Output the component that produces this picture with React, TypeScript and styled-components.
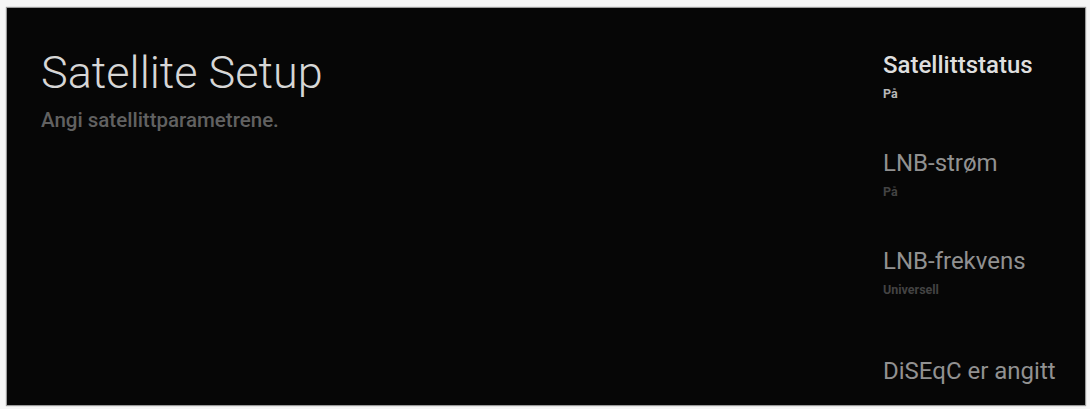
import React from 'react';
import styled, { createGlobalStyle } from 'styled-components';

const GlobalStyle = createGlobalStyle`
  html, body {
    margin: 0;
    padding: 0;
    background: #f6f6f6;
  }

  body {
    font-family: Roboto, 'Noto Sans', 'Liberation Sans', sans-serif;
  }
`;

const Screen = styled.div`
  margin: 8px 5px 4px 7px;
  height: 397px;
  background-color: #060606;
  box-shadow: 0 0 1px 1px #9a9a9a;
  display: grid;
  grid-template-columns: 1fr 202px;
  overflow: hidden;
`;

const IntroSection = styled.div`
  display: flex;
  flex-direction: column;
  gap: 10px;
  padding: 40px 0 0 34px;
`;

const Title = styled.h1`
  margin: 0;
  font-size: 45px;
  line-height: 50px;
  font-weight: 300;
  color: #d6d6d6;
`;

const Description = styled.p`
  margin: 0;
  font-size: 20.5px;
  line-height: 24px;
  font-weight: 500;
  color: #616161;
`;

const OptionList = styled.div`
  display: flex;
  flex-direction: column;
  padding-top: 20px;
`;

const Option = styled.div`
  height: 98px;
  flex-shrink: 0;
  display: flex;
  flex-direction: column;
  justify-content: center;
  gap: 8px;
`;

const OptionName = styled.p<{ $focused?: boolean }>`
  margin: 0;
  font-size: 24px;
  line-height: 26px;
  font-weight: ${(p) => (p.$focused ? 500 : 400)};
  color: ${(p) => (p.$focused ? '#dedede' : '#919191')};
  white-space: nowrap;
`;

const OptionValue = styled.p<{ $focused?: boolean }>`
  margin: 0;
  font-size: 12.5px;
  line-height: 16px;
  font-weight: 700;
  color: ${(p) => (p.$focused ? '#b8b8b8' : '#434343')};
`;

type OptionItf = {
  name: string;
  value?: string;
};

const options: OptionItf[] = [
  { name: 'Satellittstatus', value: 'På' },
  { name: 'LNB-strøm', value: 'På' },
  { name: 'LNB-frekvens', value: 'Universell' },
  { name: 'DiSEqC er angitt' },
];

const App = (): React.ReactElement => {
  return (
    <>
      <GlobalStyle />
      <Screen>
        <IntroSection>
          <Title>Satellite Setup</Title>
          <Description>Angi satellittparametrene.</Description>
        </IntroSection>
        <OptionList>
          {options.map((option, index) => (
            <Option key={option.name}>
              <OptionName $focused={index === 0}>{option.name}</OptionName>
              {option.value && (
                <OptionValue $focused={index === 0}>{option.value}</OptionValue>
              )}
            </Option>
          ))}
        </OptionList>
      </Screen>
    </>
  );
};

export default App;
